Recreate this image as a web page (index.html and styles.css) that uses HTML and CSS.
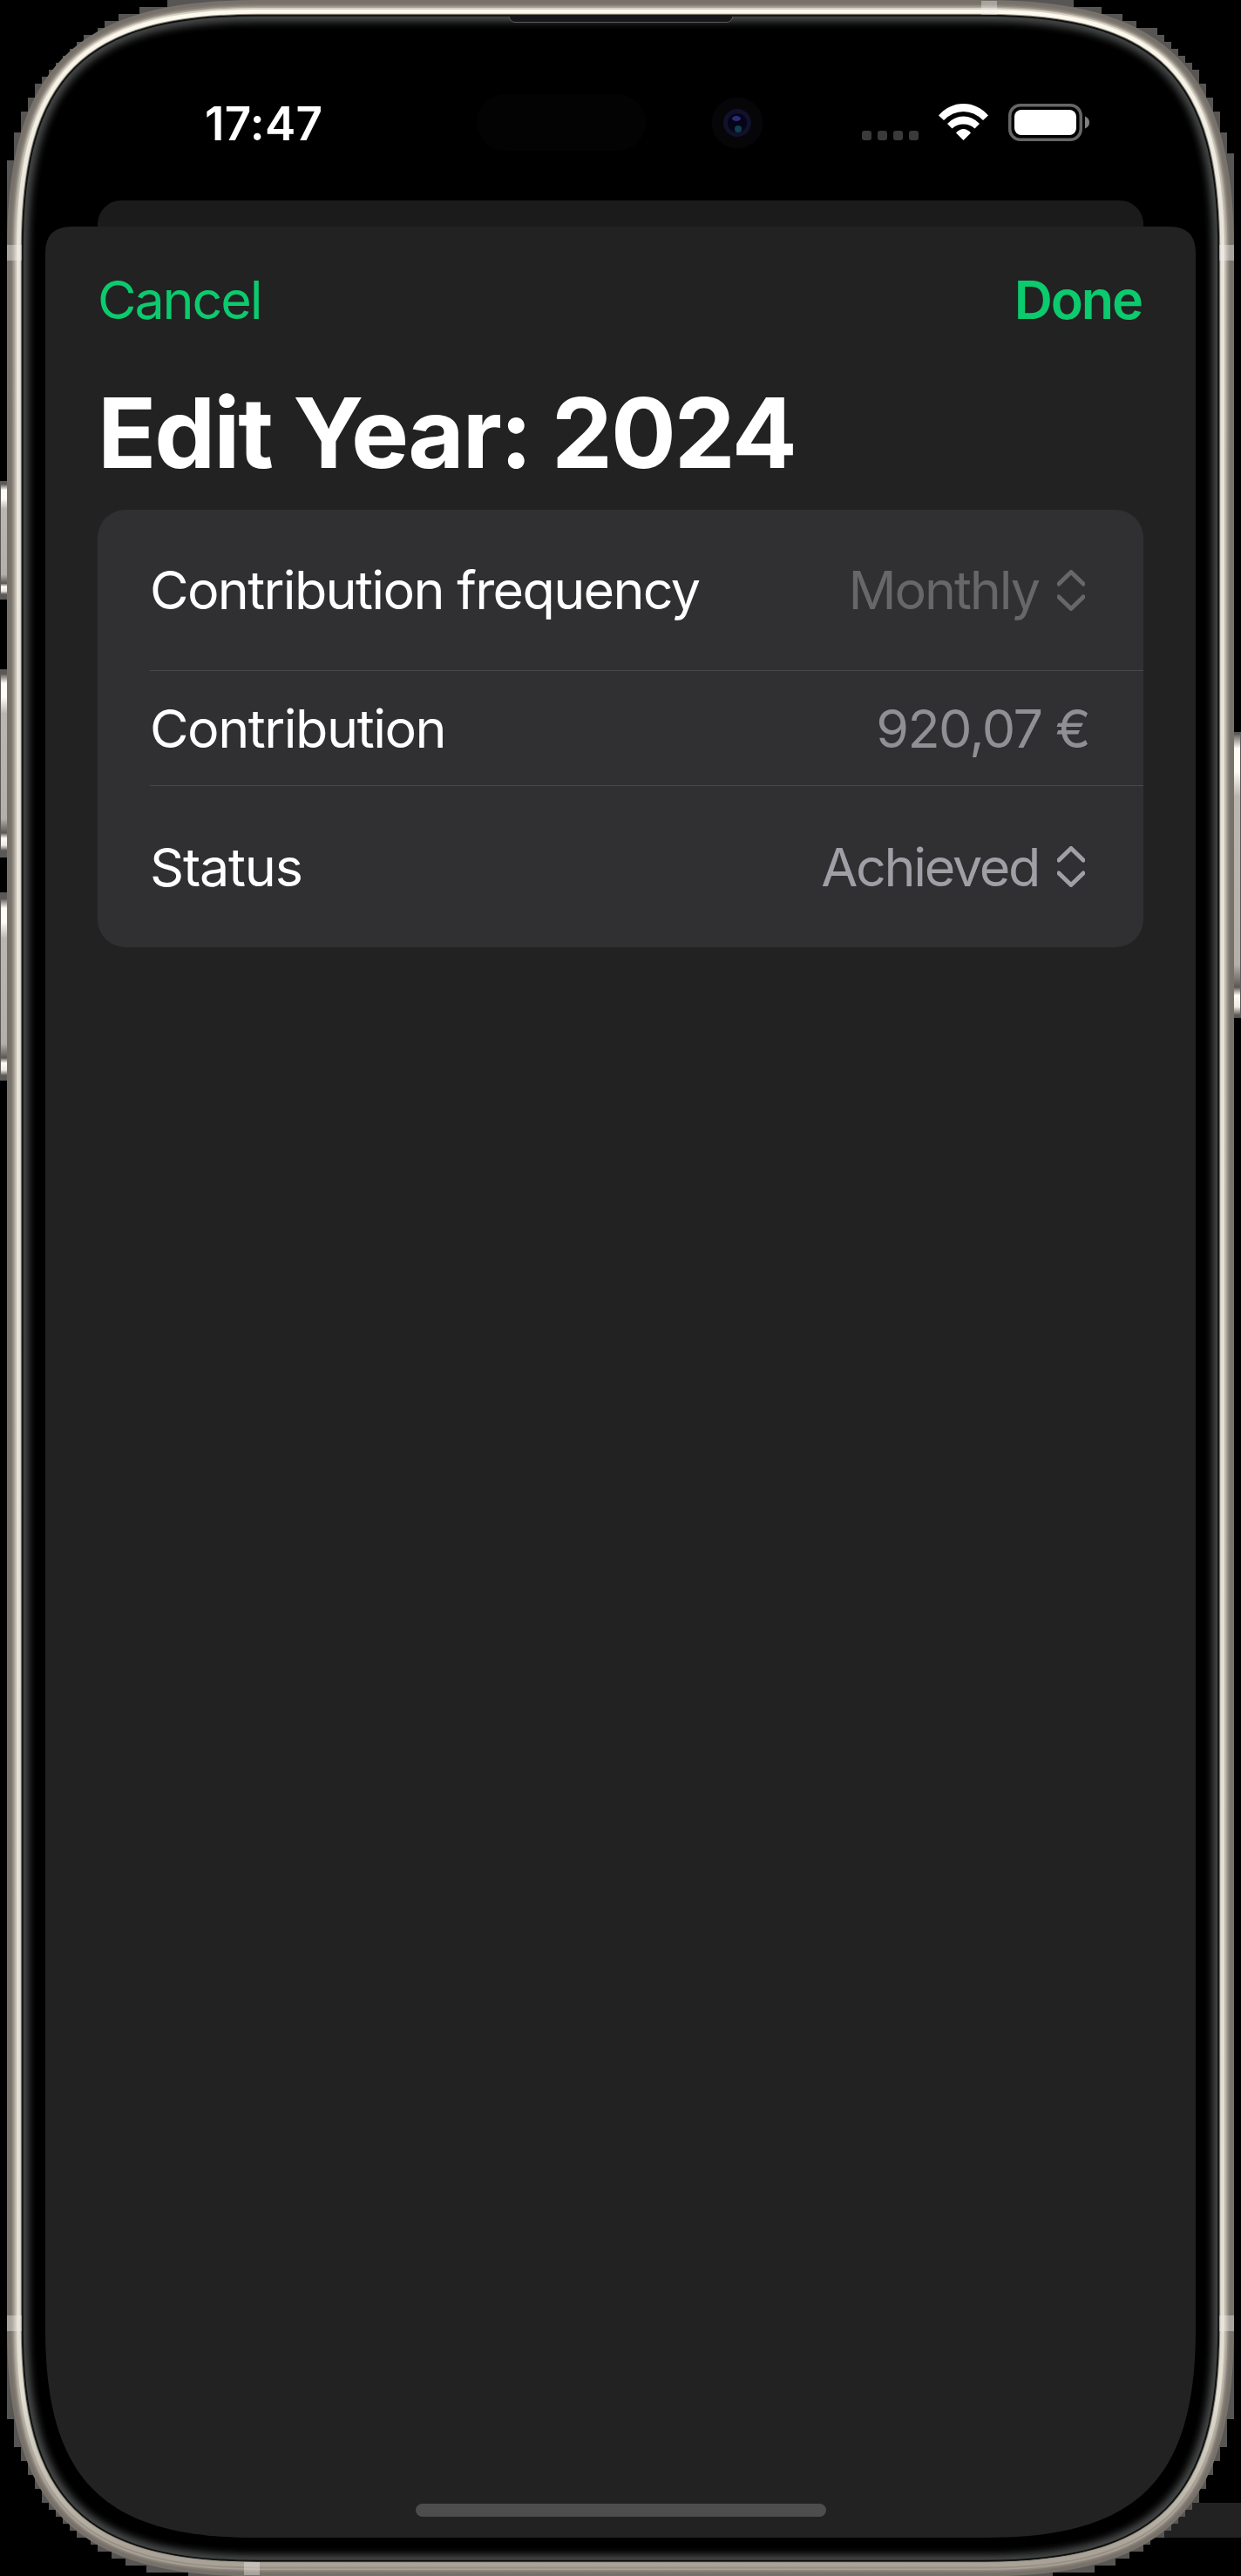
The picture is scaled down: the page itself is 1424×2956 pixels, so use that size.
FILE: index.html
```html
<!DOCTYPE html>
<html lang="en">
<head>
<meta charset="utf-8">
<title>Edit Year: 2024</title>
<link rel="stylesheet" href="styles.css">
</head>
<body>
<div class="device">
  <svg class="frame" viewBox="0 0 1424 2956" aria-hidden="true">
    <defs>
      <path id="bezel" d="M25.5 287.5C25.5 88 96 17.5 295.5 17.5H1128.500C1328 17.5 1398.500 88 1398.500 287.5V2669C1398.500 2868.500 1328 2939 1128.500 2939H295.5C96 2939 25.5 2868.500 25.5 2669Z"/>
      <clipPath id="inside"><use href="#bezel"/></clipPath>
      <filter id="soft" x="-5%" y="-5%" width="110%" height="110%"><feGaussianBlur stdDeviation="4"/></filter>
      <linearGradient id="shine" gradientUnits="userSpaceOnUse" x1="0" y1="0" x2="0" y2="2956">
        <stop offset="0" stop-color="#fffaee"/><stop offset=".08" stop-color="#e9e5da"/><stop offset=".93" stop-color="#e2ded2"/><stop offset=".99" stop-color="#aaa296"/>
      </linearGradient>
      <linearGradient id="mid" gradientUnits="userSpaceOnUse" x1="0" y1="0" x2="0" y2="2956">
        <stop offset="0" stop-color="#d8d2c6"/><stop offset=".08" stop-color="#c0bbb0"/><stop offset=".93" stop-color="#bdb7ab"/><stop offset=".99" stop-color="#978f83"/>
      </linearGradient>
      <linearGradient id="button" x1="0" y1="0" x2="0" y2="1">
        <stop offset="0" stop-color="#6a6560"/><stop offset=".05" stop-color="#fffcf5"/><stop offset=".13" stop-color="#fffcf5"/><stop offset=".22" stop-color="#bcb6b0"/><stop offset=".82" stop-color="#b5afa9"/><stop offset=".9" stop-color="#5c5752"/><stop offset=".93" stop-color="#fffcf5"/><stop offset=".97" stop-color="#eee9e2"/><stop offset="1" stop-color="#5c5752"/>
      </linearGradient>
    </defs>
    <path fill="#222" d="M1320 2872H1424V2912H1320Z"/>
    <path fill="#575655" d="M192 0H1232V8H1264V16H1288V24H1304V32H1328V40H1336V48H1344V56H1352V64H1360V72H1368V80H1376V96H1384V112H1392V128H1400V152H1408V176H1416V2776H1408V2808H1400V2824H1392V2840H1384V2856H1376V2872H1368V2880H1360V2888H1352V2896H1344V2904H1336V2912H1320V2920H1312V2928H1296V2936H1280V2944H1256V2952H1208V2956H216V2952H168V2944H144V2936H128V2928H112V2920H104V2912H88V2904H80V2896H72V2888H64V2880H56V2872H48V2856H40V2840H32V2824H24V2808H16V2776H8V184H16V152H24V128H32V112H40V96H48V88H56V80H64V72H72V64H80V56H88V48H96V40H112V32H120V24H136V16H160V8H192Z"/>
    <g fill="#5b5958"><path d="M0 552H8V688H0ZM0 768H8V984H0ZM0 1024H8V1240H0ZM1416 840H1424V1168H1416Z"/></g>
    <g fill="url(#button)"><rect x="1" y="556" width="7" height="126"/><rect x="1" y="774" width="7" height="202"/><rect x="1" y="1032" width="7" height="202"/><rect x="1416" y="843" width="7" height="322"/></g>
    <g fill="none">
      <use href="#bezel" stroke="#77716a" stroke-width="35"/>
      <use href="#bezel" stroke="#7f7971" stroke-width="27"/>
      <use href="#bezel" stroke="#8f8980" stroke-width="23"/>
      <use href="#bezel" stroke="#a8a298" stroke-width="20"/>
      <use href="#bezel" stroke="url(#mid)" stroke-width="17"/>
      <use href="#bezel" stroke="url(#shine)" stroke-width="13"/>
      <use href="#bezel" stroke="#99958a" stroke-width="3.500"/>
      <use href="#bezel" stroke="#1c1b18" stroke-width="1.500"/>
    </g>
    <g fill="#f2eeea" fill-opacity=".4"><path d="M8 281H25V299H8ZM1399 281H1416V299H1399ZM8 2657H25V2675H8ZM1399 2657H1416V2675H1399ZM1126 1H1144V17H1126ZM280 2940H298V2955H280Z"/></g>
    <use href="#bezel" fill="#000"/>
    <g clip-path="url(#inside)">
      <use href="#bezel" fill="none" stroke="#47484a" stroke-width="15" filter="url(#soft)"/>
      <use href="#bezel" fill="none" stroke="#0b0b0b" stroke-width="2.500"/>
    </g>
    <path d="M584 18Q586 26 591 26H834Q839 26 841 18Z" fill="#17171a"/>
    <path d="M584 19Q586 25.500 591 25.500H834Q839 25.500 841 19" fill="none" stroke="#5c5c5e"/>
    <rect x="547" y="108" width="194" height="65" rx="32.500" fill="#030303"/>
    <circle cx="846" cy="141" r="29.500" fill="#060508"/>
    <circle cx="846" cy="141" r="16" fill="#11112b"/>
    <circle cx="846" cy="141" r="11" fill="#050518"/>
    <ellipse cx="845" cy="136" rx="5" ry="3" fill="#2c2c74"/>
    <circle cx="847" cy="148" r="4" fill="#10404f"/>
  </svg>

  <header class="status">
    <span class="clock">17:47</span>
    <div class="indicators">
      <div class="signal"><i></i><i></i><i></i><i></i></div>
      <svg class="wifi" viewBox="0 0 57 42">
        <path d="M0 13.500Q12 0 28.500 0T57 13.500L51 19Q41 9 28.500 9T6 19Z"/>
        <path d="M10 23Q18 14.500 28.500 14.500T47 23L41.500 28.500Q36 23.500 28.500 23.500T15.500 28.500Z"/>
        <path d="M20 33.500Q24 29 28.500 29T37 33.500L28.500 42Z"/>
      </svg>
      <svg class="battery" viewBox="0 0 93 43">
        <rect x="1.750" y="1.750" width="81.500" height="39.500" rx="12" fill="none" stroke="#666" stroke-width="3.500"/>
        <rect x="7" y="7" width="71" height="29" rx="8" fill="#fff"/>
        <path d="M88 14.500Q93 16.500 93 21.500T88 28.500Z" fill="#808080"/>
      </svg>
    </div>
  </header>

  <div class="sheet-behind"></div>
  <main class="sheet">
    <nav class="toolbar">
      <span class="cancel">Cancel</span>
      <span class="done">Done</span>
    </nav>
    <h1 class="title">Edit Year: 2024</h1>
    <section class="card">
      <div class="row tall">
        <span class="label frequency">Contribution frequency</span>
        <span class="value picker muted"><span class="monthly">Monthly</span><svg class="updown" viewBox="0 0 32 47"><path d="M2 16L16 2.500L30 16M2 31L16 44.500L30 31"/></svg></span>
      </div>
      <div class="row">
        <span class="label">Contribution</span>
        <span class="value amount">920,07 €</span>
      </div>
      <div class="row tall last">
        <span class="label state">Status</span>
        <span class="value picker"><span class="achieved">Achieved</span><svg class="updown" viewBox="0 0 32 47"><path d="M2 16L16 2.500L30 16M2 31L16 44.500L30 31"/></svg></span>
      </div>
    </section>
    <div class="home"></div>
  </main>
</div>
</body>
</html>
```
FILE: styles.css
```css
* { box-sizing: border-box; }
body { margin: 0; background: #000; font-family: Inter, "Liberation Sans", sans-serif; color: #fff; }
.device { position: relative; width: 1424px; height: 2956px; overflow: hidden; display: flex; flex-direction: column; align-items: center; }
.frame { position: absolute; inset: 0; width: 1424px; height: 2956px; }
.status, .sheet-behind, .sheet { position: relative; }
.status { width: 100%; height: 230px; padding: 112px 174px 0 235px; display: flex; justify-content: space-between; align-items: flex-start; }
.clock { font-size: 53px; line-height: 60px; font-weight: 600; letter-spacing: 0.3px; }
.indicators { display: flex; padding-top: 7px; }
.signal { display: flex; gap: 7px; padding-top: 31px; margin-right: 23px; }
.signal i { width: 11px; height: 11px; border-radius: 3px; background: #3a3a3a; }
.wifi { width: 57px; height: 42px; fill: #fff; margin-right: 23px; }
.battery { width: 93px; height: 43px; }
.sheet-behind { width: 1200px; height: 30px; flex: none; border-radius: 27px 27px 0 0; background: #1b1b1b; }
.sheet { width: 1320px; height: 2652px; flex: none; padding: 0 60px; background: #222; clip-path: path("M0 30Q0 0 30 0H1290Q1320 0 1320 30V2412C1320 2585 1253 2652 1080 2652H240C67 2652 0 2585 0 2412Z"); display: flex; flex-direction: column; }
.toolbar { height: 170px; padding: 48px 2px 0 0; display: flex; justify-content: space-between; font-size: 61px; line-height: 72px; color: #0cca6e; }
.cancel { font-weight: 420; letter-spacing: -2.1px; }
.done { font-weight: 600; letter-spacing: -2.1px; }
.title { margin: 0; height: 155px; font-size: 111px; line-height: 134px; font-weight: 700; letter-spacing: -2.05px; white-space: nowrap; }
.card { height: 502px; border-radius: 32px; background: #303032; padding-left: 60px; font-size: 61px; line-height: 74px; font-weight: 420; }
.row { display: flex; justify-content: space-between; align-items: center; height: 132px; padding-right: 62px; border-bottom: 1px solid #48484a; white-space: nowrap; }
.tall { height: 185px; }
.last { border-bottom: 0; }
.label { letter-spacing: -1.45px; }
.frequency { letter-spacing: -1.65px; }
.state { letter-spacing: -1.2px; }
.value { display: flex; align-items: center; color: #9f9fa5; }
.picker { padding-right: 5px; }
.monthly { letter-spacing: -2.1px; }
.achieved { letter-spacing: -2.3px; }
.muted { color: #67676a; }
.amount { color: #8f8f94; letter-spacing: -1.6px; }
.updown { width: 32px; height: 47px; margin-left: 21px; fill: none; stroke: currentColor; stroke-width: 5; stroke-linecap: round; stroke-linejoin: round; }
.home { width: 471px; height: 15px; border-radius: 8px; background: #4d4d4d; margin: auto auto 24px; }
```
